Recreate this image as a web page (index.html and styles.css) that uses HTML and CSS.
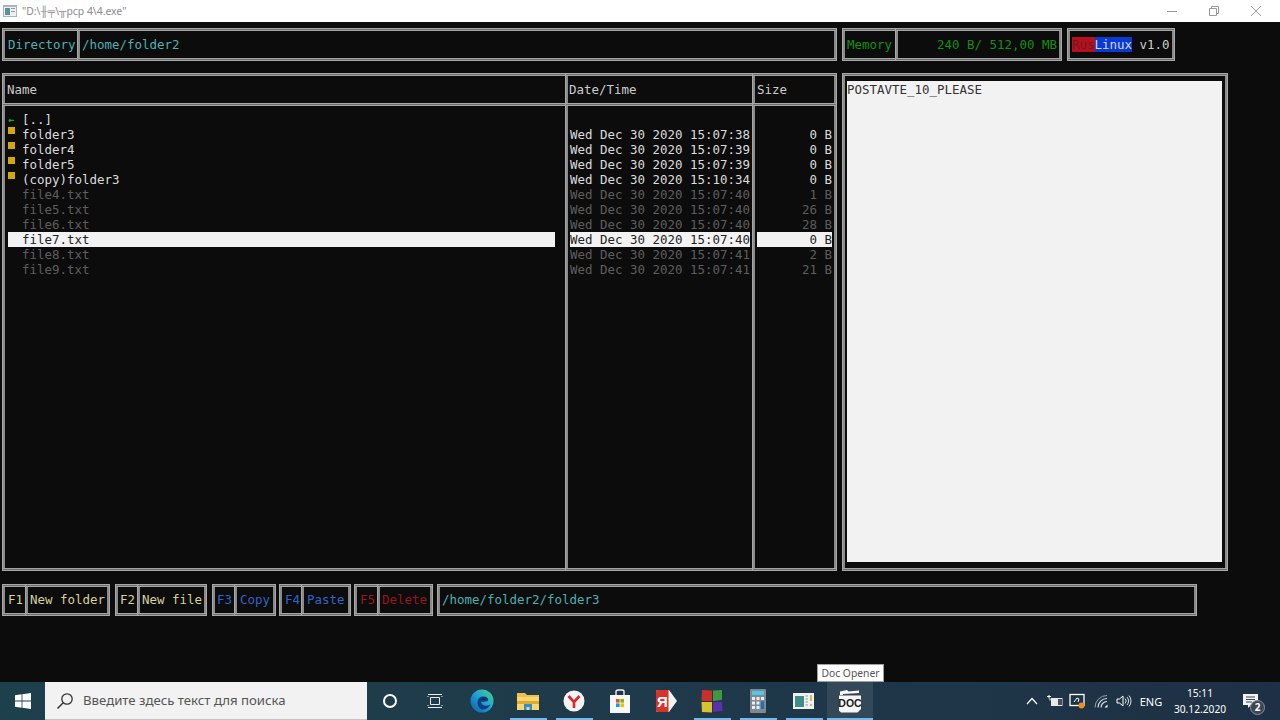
FILE: index.html
```html
<!DOCTYPE html>
<html>
<head>
    <meta charset="utf-8">
    <title>4.exe</title>
    <link rel="stylesheet" href="styles.css">
</head>
<body>
    <div class="titlebar">
        <svg class="app-icon" width="14" height="14" viewBox="0 0 14 14">
            <rect x="0" y="1" width="14" height="12" fill="#a9b5ba"/>
            <rect x="1" y="3" width="12" height="9" fill="#eef1f2"/>
            <rect x="2" y="4" width="5" height="7" fill="#5f8f98"/>
            <rect x="8" y="4" width="4" height="1" fill="#999"/>
            <rect x="8" y="7" width="4" height="1" fill="#999"/>
        </svg>
        <span class="title-text">"D:\╫╤\╥pcp 4\4.exe"</span>
        <div class="win-buttons">
            <span class="win-btn"><svg width="12" height="12" viewBox="0 0 12 12"><path d="M1 6.5h10" stroke="#999" fill="none"/></svg></span>
            <span class="win-btn"><svg width="12" height="12" viewBox="0 0 12 12"><path d="M1.5 3.5h7v7h-7zM3.5 3.5v-2h7v7h-2" stroke="#999" fill="none"/></svg></span>
            <span class="win-btn"><svg width="12" height="12" viewBox="0 0 12 12"><path d="M1 1l10 10M11 1L1 11" stroke="#999" fill="none"/></svg></span>
        </div>
    </div>

    <div class="console">
        <div class="top-row">
            <div class="group">
                <div class="cell dir-label cyan">Directory</div>
                <div class="cell dir-value cyan">/home/folder2</div>
            </div>
            <div class="group mem-group">
                <div class="cell mem-label green">Memory</div>
                <div class="cell mem-value green">240 B/ 512,00 MB</div>
            </div>
            <div class="group ver-group">
                <div class="cell ver"><span class="rus">Rus</span><span class="linux">Linux</span><span class="light">&nbsp;v1.0</span></div>
            </div>
        </div>

        <div class="main-row">
            <div class="col col-name">
                <div class="cell col-head light">Name</div>
                <div class="cell col-body">
                    <div class="row bright"><span class="mark arrow">←</span>[..]</div>
                    <div class="row bright"><span class="mark"><i class="folder"></i></span>folder3</div>
                    <div class="row bright"><span class="mark"><i class="folder"></i></span>folder4</div>
                    <div class="row bright"><span class="mark"><i class="folder"></i></span>folder5</div>
                    <div class="row bright"><span class="mark"><i class="folder"></i></span>(copy)folder3</div>
                    <div class="row dim"><span class="mark"></span>file4.txt</div>
                    <div class="row dim"><span class="mark"></span>file5.txt</div>
                    <div class="row dim"><span class="mark"></span>file6.txt</div>
                    <div class="row selected"><span class="mark"></span>file7.txt</div>
                    <div class="row dim"><span class="mark"></span>file8.txt</div>
                    <div class="row dim"><span class="mark"></span>file9.txt</div>
                </div>
            </div>
            <div class="col col-date">
                <div class="cell col-head light">Date/Time</div>
                <div class="cell col-body">
                    <div class="row"></div>
                    <div class="row bright">Wed Dec 30 2020 15:07:38</div>
                    <div class="row bright">Wed Dec 30 2020 15:07:39</div>
                    <div class="row bright">Wed Dec 30 2020 15:07:39</div>
                    <div class="row bright">Wed Dec 30 2020 15:10:34</div>
                    <div class="row dim">Wed Dec 30 2020 15:07:40</div>
                    <div class="row dim">Wed Dec 30 2020 15:07:40</div>
                    <div class="row dim">Wed Dec 30 2020 15:07:40</div>
                    <div class="row selected">Wed Dec 30 2020 15:07:40</div>
                    <div class="row dim">Wed Dec 30 2020 15:07:41</div>
                    <div class="row dim">Wed Dec 30 2020 15:07:41</div>
                </div>
            </div>
            <div class="col col-size">
                <div class="cell col-head light">Size</div>
                <div class="cell col-body">
                    <div class="row"></div>
                    <div class="row bright size">0 B</div>
                    <div class="row bright size">0 B</div>
                    <div class="row bright size">0 B</div>
                    <div class="row bright size">0 B</div>
                    <div class="row dim size">1 B</div>
                    <div class="row dim size">26 B</div>
                    <div class="row dim size">28 B</div>
                    <div class="row selected size">0 B</div>
                    <div class="row dim size">2 B</div>
                    <div class="row dim size">21 B</div>
                </div>
            </div>
            <div class="cell preview">
                <div class="preview-page">POSTAVTE_10_PLEASE</div>
            </div>
        </div>

        <div class="bottom-row">
            <div class="group"><div class="cell f1-key tan">F1</div><div class="cell f1-label tan">New folder</div></div>
            <div class="group"><div class="cell f2-key tan">F2</div><div class="cell f2-label tan">New file</div></div>
            <div class="group"><div class="cell f3-key blue">F3</div><div class="cell f3-label blue">Copy</div></div>
            <div class="group"><div class="cell f4-key blue">F4</div><div class="cell f4-label blue">Paste</div></div>
            <div class="group"><div class="cell f5-key red">F5</div><div class="cell f5-label red">Delete</div></div>
            <div class="group"><div class="cell path cyan">/home/folder2/folder3</div></div>
        </div>
    </div>

    <div class="taskbar">
        <div class="start">
            <svg width="16" height="16" viewBox="0 0 16 16"><path d="M0 2.2l6.6-.9v6.3H0zM7.4 1.2L16 0v7.6H7.4zM0 8.4h6.6v6.3L0 13.8zM7.4 8.4H16V16l-8.6-1.2z" fill="#fff"/></svg>
        </div>
        <div class="search">
            <svg width="18" height="18" viewBox="0 0 18 18"><circle cx="11" cy="7" r="5.2" stroke="#333" stroke-width="1.3" fill="none"/><path d="M7.2 10.8L1.5 16.5" stroke="#333" stroke-width="1.5"/></svg>
            <span>Введите здесь текст для поиска</span>
        </div>
        <div class="slot"><svg width="16" height="16" viewBox="0 0 16 16"><circle cx="8" cy="8" r="6" stroke="#fff" stroke-width="2" fill="none"/></svg></div>
        <div class="slot task-view"><svg width="16" height="16" viewBox="0 0 16 16"><path d="M3.5 4.5h9v7h-9zM1 1.500h14M1 14.500h14M1 3v1M15 3v1M1 12v1M15 12v1" stroke="#e8ecee" fill="none"/></svg></div>
        <div class="slot">
            <svg width="24" height="24" viewBox="0 0 24 24">
                <defs><linearGradient id="edgeGrad" x1="0" y1="1" x2="1" y2="0"><stop offset="0" stop-color="#0c59a4"/><stop offset=".55" stop-color="#1fa6d8"/><stop offset="1" stop-color="#54d36a"/></linearGradient></defs>
                <circle cx="12" cy="12" r="11.500" fill="url(#edgeGrad)"/>
                <path d="M7.500 13c0-3.500 3-5.500 6-5.500 2.800 0 4.800 1.600 4.800 3.500 0 1.300-1.500 1.700-5 1.700H11c.2 2.500 2.500 4 5.200 4 1.500 0 3-.4 4.300-1.100-1.400 3-4.500 5-8 5-2.800 0-5-3.500-5-7.600z" fill="#0f3f7d"/>
                <path d="M11.200 10.800c.5-1.200 1.500-1.800 2.500-1.800s1.800.7 1.800 1.800z" fill="#1c2f3d"/>
            </svg>
        </div>
        <div class="slot run">
            <svg width="22" height="18" viewBox="0 0 22 18">
                <path d="M0 1h8l2 2h12v15H0z" fill="#f0c04a"/>
                <rect x="0" y="5" width="22" height="13" fill="#f7d774"/>
                <rect x="0" y="9" width="22" height="3" fill="#e0a92f"/>
                <path d="M7 18v-6h8v6h-2.500v-3h-3v3z" fill="#2d8fd6"/>
            </svg>
        </div>
        <div class="slot run">
            <svg width="22" height="22" viewBox="0 0 22 22"><circle cx="11" cy="11" r="10.500" fill="#f4f4f4"/><path d="M5.500 6l5.500 6v6M16.500 6L11 12" stroke="#d9272e" stroke-width="2.600" fill="none"/></svg>
        </div>
        <div class="slot">
            <svg width="22" height="24" viewBox="0 0 22 24">
                <path d="M1 6h20v18H1z" fill="#f7f7f7"/>
                <path d="M7 6V2.500C7 1.500 8 1 9 1h4c1 0 2 .5 2 1.500V6" stroke="#f0f0f0" stroke-width="1.400" fill="none"/>
                <rect x="7" y="10" width="3.600" height="3.600" fill="#ef5023"/><rect x="11.400" y="10" width="3.600" height="3.600" fill="#7fba00"/>
                <rect x="7" y="14.400" width="3.600" height="3.600" fill="#00a4ef"/><rect x="11.400" y="14.400" width="3.600" height="3.600" fill="#ffb900"/>
            </svg>
        </div>
        <div class="slot">
            <svg width="22" height="24" viewBox="0 0 22 24">
                <path d="M3 1h11l8 11-8 11H3c-1.500 0-2-1-2-2V3c0-1 .5-2 2-2z" fill="#f3f3f3"/>
                <path d="M3 1h10.500v22H3c-1.500 0-2-1-2-2V3c0-1 .5-2 2-2z" fill="#d8322c"/>
                <text x="7.500" y="17.500" font-family="Liberation Sans, sans-serif" font-size="15" font-weight="700" fill="#fff" text-anchor="middle">Я</text>
            </svg>
        </div>
        <div class="slot run">
            <svg width="22" height="24" viewBox="0 0 22 24">
                <path d="M1 1l10 .5V12H.5z" fill="#c9302c"/><path d="M12 1.500L21 1v10l-9 1z" fill="#3f9a3f"/>
                <path d="M.5 13H11v10.500L1 23z" fill="#d9c22f"/><path d="M12 13h9l.5 9-9.500 1z" fill="#5b2fb0"/>
            </svg>
        </div>
        <div class="slot run">
            <svg width="18" height="24" viewBox="0 0 18 24">
                <rect x="1" y="0" width="16" height="24" rx="1" fill="#7d8a92"/>
                <rect x="3" y="2" width="12" height="4" fill="#56c3e8"/>
                <path d="M3 8h3v3H3zM7.500 8h3v3h-3zM12 8h3v3h-3zM3 12.500h3v3H3zM7.500 12.500h3v3h-3zM3 17h3v3H3zM7.500 17h3v3h-3z" fill="#e8eef2"/>
                <rect x="12" y="12.500" width="3" height="7.500" fill="#1f6fb8"/>
            </svg>
        </div>
        <div class="slot run">
            <svg width="22" height="18" viewBox="0 0 22 18">
                <rect x="0" y="1" width="21" height="16" fill="#eef1f2"/>
                <rect x="2" y="4" width="9" height="11" fill="#3f8d86"/>
                <path d="M12.500 4H15M12.500 7H15M12.500 10H15M12.500 13H15" stroke="#8a9aa2"/>
                <path d="M18 3v6M18 12v2" stroke="#d6a51e" stroke-width="1.500"/>
            </svg>
        </div>
        <div class="slot run active">
            <svg width="24" height="24" viewBox="0 0 24 24">
                <path d="M2 6V2.500L9 1l1.500 1.500L21 1.500V4L5 5v1z" fill="#fff"/>
                <path d="M1 6.500h22V20l-3.500 3.500H3L1 21.500z" fill="#f7f7f7"/>
                <text x="12" y="18" font-family="Liberation Sans, sans-serif" font-size="10.500" font-weight="700" fill="#1a1a1a" text-anchor="middle">DOC</text>
            </svg>
        </div>

        <div class="tray">
            <div class="tray-slot"><svg width="12" height="8" viewBox="0 0 12 8"><path d="M1 7l5-5.500L11 7" stroke="#fff" stroke-width="1.200" fill="none"/></svg></div>
            <div class="tray-slot"><svg width="16" height="12" viewBox="0 0 16 12"><rect x="4" y="3" width="11.500" height="8" fill="#e8e8e8"/><path d="M0 1.500h4M2 0v3.500M3 3.500v2" stroke="#fff" fill="none"/><rect x="11" y="4" width="4" height="6" fill="#44515c"/></svg></div>
            <div class="tray-slot"><svg width="17" height="17" viewBox="0 0 17 17"><rect x="1" y="1.500" width="14" height="11" stroke="#fff" stroke-width="1.300" fill="none"/><path d="M5 9l3-4 2 1-1 3" stroke="#fff" fill="none"/><circle cx="12.500" cy="12.500" r="3" fill="#f08c1a"/></svg></div>
            <div class="tray-slot"><svg width="14" height="14" viewBox="0 0 14 14"><path d="M1 13.500A12 12 0 0 1 13 1.500" stroke="#99a5ad" fill="none"/><path d="M4 13.500A9 9 0 0 1 13 4.500M7 13.500A6 6 0 0 1 13 7.500" stroke="#dfe4e7" stroke-width="1.100" fill="none"/><path d="M13.500 10.500v3h-3z" fill="#fff"/></svg></div>
            <div class="tray-slot"><svg width="16" height="14" viewBox="0 0 16 14"><path d="M1 5h2.500L7 2v10L3.500 9H1z" stroke="#fff" fill="none"/><path d="M9 4.500a3.500 3.500 0 0 1 0 5M11 3a6 6 0 0 1 0 8M13 1.500a8.500 8.500 0 0 1 0 11" stroke="#dfe4e7" fill="none"/></svg></div>
            <div class="lang">ENG</div>
            <div class="clock"><span>15:11</span><span>30.12.2020</span></div>
            <div class="notify">
                <svg width="16" height="15" viewBox="0 0 16 15"><path d="M0 0h15v11H8l-3 3v-3H0z" fill="#f2f2f2"/><path d="M3 3h9M3 5.500h9M3 8h6" stroke="#33454f"/></svg>
                <span class="badge">2</span>
            </div>
        </div>
    </div>

    <div class="tooltip">Doc Opener</div>
</body>
</html>
```

FILE: styles.css
```css
* {
    box-sizing: border-box;
}
body {
    margin: 0;
    width: 1280px;
    height: 720px;
    overflow: hidden;
    display: flex;
    flex-direction: column;
    background-color: #0c0c0c;
    font-family: "DejaVu Sans Mono", monospace;
    font-size: 12.46px;
    line-height: 15px;
    white-space: nowrap;
}

/* window title */
.titlebar {
    height: 22px;
    flex-shrink: 0;
    display: flex;
    align-items: center;
    background-color: white;
    font-family: "Noto Sans", sans-serif;
    font-size: 10.4px;
    color: #8a8a8a;
}
.app-icon {
    margin-left: 3px;
    margin-right: 5px;
}
.win-buttons {
    display: flex;
    margin-left: auto;
    margin-right: 2px;
}
.win-btn {
    width: 44px;
    display: flex;
    justify-content: center;
    margin-left: -2px;
}

/* console frames */
.console {
    flex: 1;
    padding-top: 6px;
    padding-left: 2px;
}
.cell {
    display: flex;
    align-items: center;
    height: 33px;
    padding-left: 4px;
    border: 1px solid #a8a8a8;
    box-shadow:
        inset 0 1px 0 #6e6e6e,
        inset 0 -1px 0 #6e6e6e,
        inset 0 2px 0 #a4a4a4,
        inset 0 -2px 0 #a4a4a4,
        inset 2px 0 0 #8a8a8a,
        inset -2px 0 0 #8a8a8a;
}
.cell + .cell {
    margin-left: -3px;
}
.group {
    display: flex;
}
.top-row {
    display: flex;
}
.main-row {
    display: flex;
    margin-top: 12px;
    height: 498px;
}
.bottom-row {
    display: flex;
    margin-top: 13px;
}

.cyan { color: #4fb0b0; }
.green { color: #138f12; }
.tan { color: #d6d29a; }
.blue { color: #3264c8; }
.red { color: #9c1420; }
.light { color: #cccccc; }
.bright { color: #dcdcdc; }
.dim { color: #5e5e5e; }

.dir-label { width: 78px; padding-left: 5px; }
.dir-value { width: 760px; padding-left: 4px; }
.mem-group { margin-left: 5px; }
.mem-label { width: 56px; }
.mem-value { width: 167px; justify-content: flex-end; padding-right: 4px; }
.ver-group { margin-left: 5px; }
.ver { width: 108px; }
.rus {
    background-color: #b80f1e;
    color: #6e1b20;
}
.linux {
    background-color: #0a3ad6;
    color: #d8d8d8;
}

/* file panel */
.col {
    display: flex;
    flex-direction: column;
    flex-shrink: 0;
}
.col + .col {
    margin-left: -3px;
}
.col-name { width: 566px; }
.col-date { width: 190px; }
.col-size { width: 85px; }
.col-head {
    flex-shrink: 0;
}
.col-date .col-head {
    padding-left: 3px;
}
.col-body {
    flex: 1;
    display: block;
    height: auto;
    margin-top: -3px;
    padding: 8px 4px 0;
}
.col-body.cell {
    margin-left: 0;
}
.col-name .col-body {
    padding-left: 5px;
    padding-right: 12px;
}
.row {
    display: flex;
    height: 15px;
}
.size {
    justify-content: flex-end;
}
.selected {
    background-color: #f2f2f2;
    color: #222222;
}
.mark {
    width: 14px;
    flex-shrink: 0;
}
.arrow {
    color: #16b30e;
    font-size: 10px;
    font-weight: 700;
}
.folder {
    display: block;
    width: 7px;
    height: 7px;
    background-color: #d2a80e;
}

.preview {
    width: 386px;
    height: 498px;
    flex-shrink: 0;
    margin-left: 5px;
    display: block;
    padding: 7px 5px 8px 4px;
}
.preview-page {
    height: 100%;
    background-color: #f2f2f2;
    color: #333333;
    padding-top: 1px;
}

/* function keys */
.bottom-row .group {
    margin-right: 5px;
}
.bottom-row .cell {
    height: 32px;
    flex-shrink: 0;
    padding-bottom: 2px;
}
.f1-key { width: 26px; padding-left: 5px; }
.f1-label { width: 85px; }
.f2-key { width: 25px; }
.f2-label { width: 70px; }
.f3-key { width: 25px; }
.f3-label { width: 42px; padding-left: 5px; }
.f4-key { width: 25px; padding-left: 5px; }
.f4-label { width: 50px; padding-left: 5px; }
.f5-key { width: 26px; padding-left: 5px; }
.f5-label { width: 56px; }
.path { width: 760px; }
.bottom-row .group:nth-child(3) { margin-right: 3px; }
.bottom-row .group:nth-child(4) { margin-right: 3px; }
.bottom-row .group:nth-child(5) { margin-right: 4px; }

/* windows taskbar */
.taskbar {
    height: 38px;
    flex-shrink: 0;
    display: flex;
    align-items: stretch;
    background: linear-gradient(90deg, #1d404c, #1f3a4a 50%, #1e3045);
    font-family: "Noto Sans", sans-serif;
    color: white;
}
.start {
    width: 45px;
    display: flex;
    align-items: center;
    justify-content: center;
}
.search {
    width: 322px;
    display: flex;
    align-items: center;
    padding-left: 11px;
    gap: 9px;
    background-color: #f2f2f2;
    border-bottom: 1px solid #c4c4c4;
    color: #555555;
    font-size: 13.2px;
}
.slot {
    position: relative;
    width: 46px;
    display: flex;
    align-items: center;
    justify-content: center;
}
.task-view svg {
    margin-right: 2px;
}
.run::after {
    content: "";
    position: absolute;
    left: 5px;
    right: 4px;
    bottom: 0;
    height: 2px;
    background-color: #76b9ed;
}
.active {
    background-color: #33495a;
}
.active::after {
    left: 0;
    right: 0;
}
.tray {
    margin-left: auto;
    display: flex;
    align-items: center;
    padding-right: 13px;
    font-size: 11px;
}
.tray-slot {
    width: 23px;
    display: flex;
    justify-content: center;
}
.lang {
    width: 32px;
    margin-right: 3px;
    text-align: center;
}
.clock {
    width: 60px;
    margin-right: 5px;
    display: flex;
    flex-direction: column;
    align-items: center;
    font-size: 10.2px;
    line-height: 16px;
}
.notify {
    position: relative;
    width: 32px;
    display: flex;
    justify-content: center;
}
.badge {
    position: absolute;
    left: 15px;
    top: 6px;
    width: 15px;
    height: 15px;
    border-radius: 50%;
    background-color: #3c4650;
    border: 1px solid #8a949c;
    font-size: 10px;
    line-height: 13px;
    text-align: center;
    font-weight: 700;
}

.tooltip {
    position: absolute;
    left: 817px;
    top: 664px;
    width: 67px;
    height: 18px;
    background-color: white;
    border: 1px solid #a0a0a0;
    font-family: "Noto Sans", sans-serif;
    font-size: 10.3px;
    line-height: 16px;
    text-align: center;
    color: #555555;
}
```
